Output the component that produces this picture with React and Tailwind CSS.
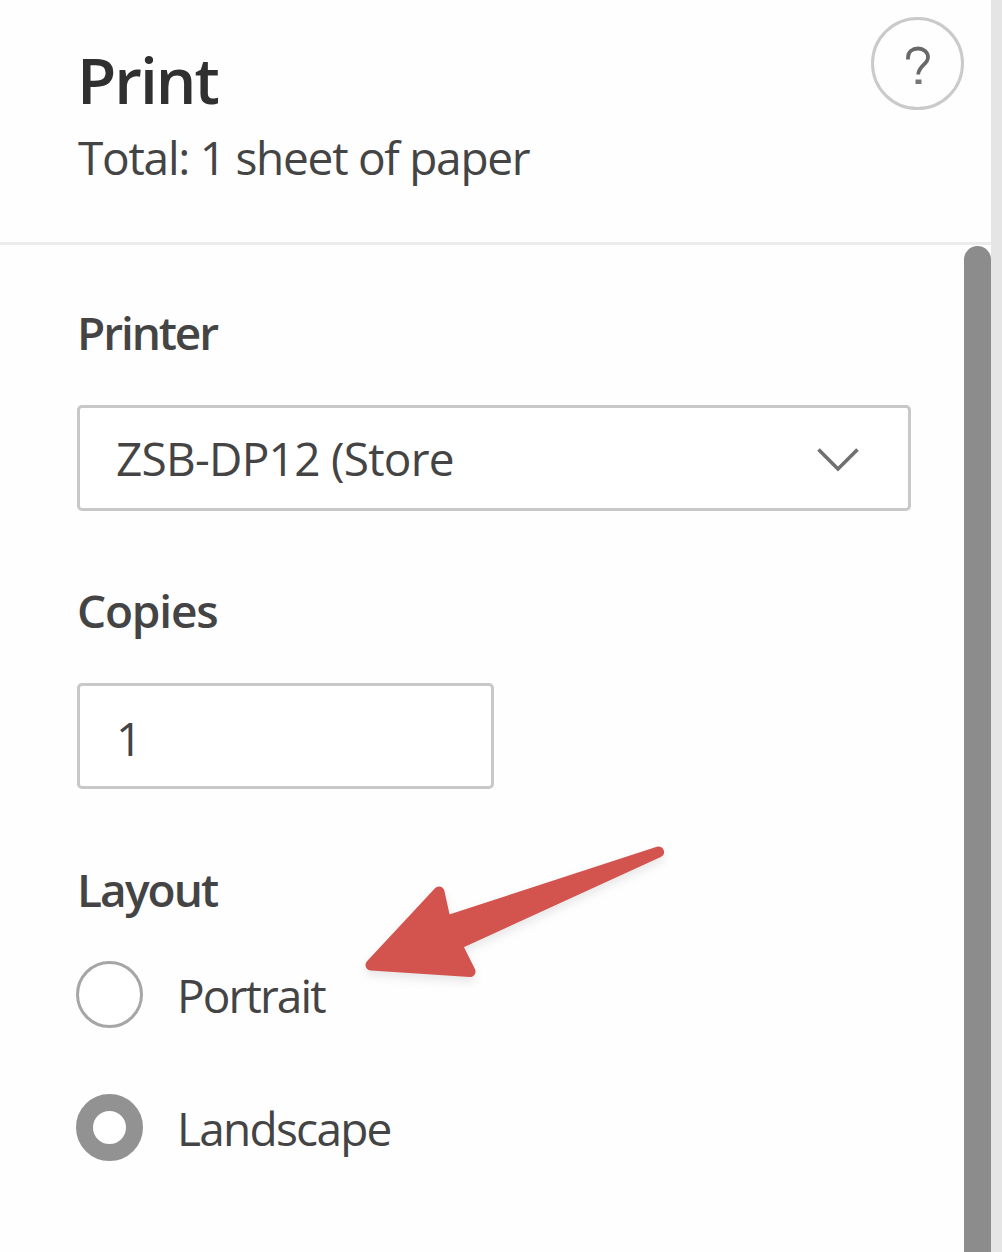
import { useState } from 'react';

const layouts = ['Portrait', 'Landscape'];

function ChevronIcon() {
  return (
    <svg className="mt-1" width="44" height="26" viewBox="0 0 44 26" fill="none" stroke="#707070" strokeWidth="3.6">
      <path d="M2.500 2.500 22 22 41.500 2.500" />
    </svg>
  );
}

function HelpIcon() {
  return (
    <svg className="mt-1" width="28" height="42" viewBox="0 0 28 42" fill="none">
      <path
        d="M4 14.5V12.5C4 6.8 8.400 3.500 14 3.500S24 7.200 24 12.200C24 19.500 14.300 20.500 14.300 29.500"
        stroke="#686868"
        strokeWidth="3.800"
      />
      <path d="M11.500 34.500h6v4.500h-6z" fill="#777" />
    </svg>
  );
}

function Radio({ label, checked, onSelect }) {
  return (
    <button
      type="button"
      role="radio"
      aria-checked={checked}
      onClick={onSelect}
      className="flex h-[67px] items-center gap-[34px] text-left"
    >
      <span
        className={`size-[67px] shrink-0 rounded-full bg-white ${
          checked ? 'border-[17px] border-[#929292]' : 'border-[3px] border-[#a6a6a6]'
        }`}
      />
      <span className={`text-[46px] leading-[60px] ${checked ? 'tracking-[-1.75px]' : 'tracking-[-1.9px]'}`}>
        {label}
      </span>
    </button>
  );
}

// Callout arrow pointing at the Portrait option
function Arrow() {
  return (
    <svg
      className="absolute top-[820px] left-[340px] drop-shadow-[0_5px_5px_rgba(0,0,0,0.09)]"
      width="350"
      height="180"
      viewBox="0 0 350 180"
    >
      <path
        d="M31 145 99 72 105.500 101.500 318.500 32 116.500 124.500 130 151.500Z"
        fill="#d3544f"
        stroke="#d3544f"
        strokeWidth="11"
        strokeLinejoin="round"
      />
    </svg>
  );
}

export default function App() {
  const [layout, setLayout] = useState('Landscape');

  return (
    <div className="relative flex h-[1252px] w-[1002px] overflow-hidden bg-[#e5e5e5] font-['Open_Sans','Noto_Sans',sans-serif] text-[#444]">
      <div className="flex w-[991px] flex-col bg-[#fefefe]">
        <header className="flex h-[245px] shrink-0 justify-between border-b-[3px] border-[#ececec] pr-[27px] pl-[77px]">
          <div className="pt-[40px]">
            <h1 className="text-[64px] leading-[80px] font-semibold tracking-[-2px] text-[#303030]">Print</h1>
            <p className="mt-[5px] pl-px text-[46px] leading-[64px] tracking-[-1.27px]">Total: 1 sheet of paper</p>
          </div>
          <button
            type="button"
            aria-label="Help"
            className="mt-[17px] flex size-[93px] items-center justify-center rounded-full border-[3px] border-[#cacaca]"
          >
            <HelpIcon />
          </button>
        </header>

        <div className="flex flex-1 justify-between">
          <main className="w-[911px] pt-[55px] pl-[77px]">
            <h2 className="text-[46px] leading-[64px] font-semibold tracking-[-2.1px]">Printer</h2>
            <div className="mt-[41px] flex h-[106px] items-center justify-between rounded-[5px] border-[3px] border-[#c8c8c8] bg-white pr-[48px] pl-[36px]">
              <span className="text-[46px] leading-[64px] tracking-[-0.75px]">ZSB-DP12 (Store</span>
              <ChevronIcon />
            </div>

            <h2 className="mt-[67px] text-[46px] leading-[64px] font-semibold tracking-[-1.2px]">Copies</h2>
            <div className="mt-[41px] flex h-[106px] w-[417px] items-center rounded-[5px] border-[3px] border-[#c8c8c8] bg-white pt-1 pl-[36px]">
              <span className="text-[46px] leading-[64px]">1</span>
            </div>

            <h2 className="mt-[68px] text-[46px] leading-[64px] font-semibold tracking-[-1.9px]">Layout</h2>
            <div role="radiogroup" className="-ml-px mt-[40px] flex flex-col gap-[66px]">
              {layouts.map((name) => (
                <Radio key={name} label={name} checked={layout === name} onSelect={() => setLayout(name)} />
              ))}
            </div>
          </main>
          <div className="mt-px w-[27px] rounded-t-full bg-[#8c8c8c]" />
        </div>
      </div>
      <Arrow />
    </div>
  );
}
